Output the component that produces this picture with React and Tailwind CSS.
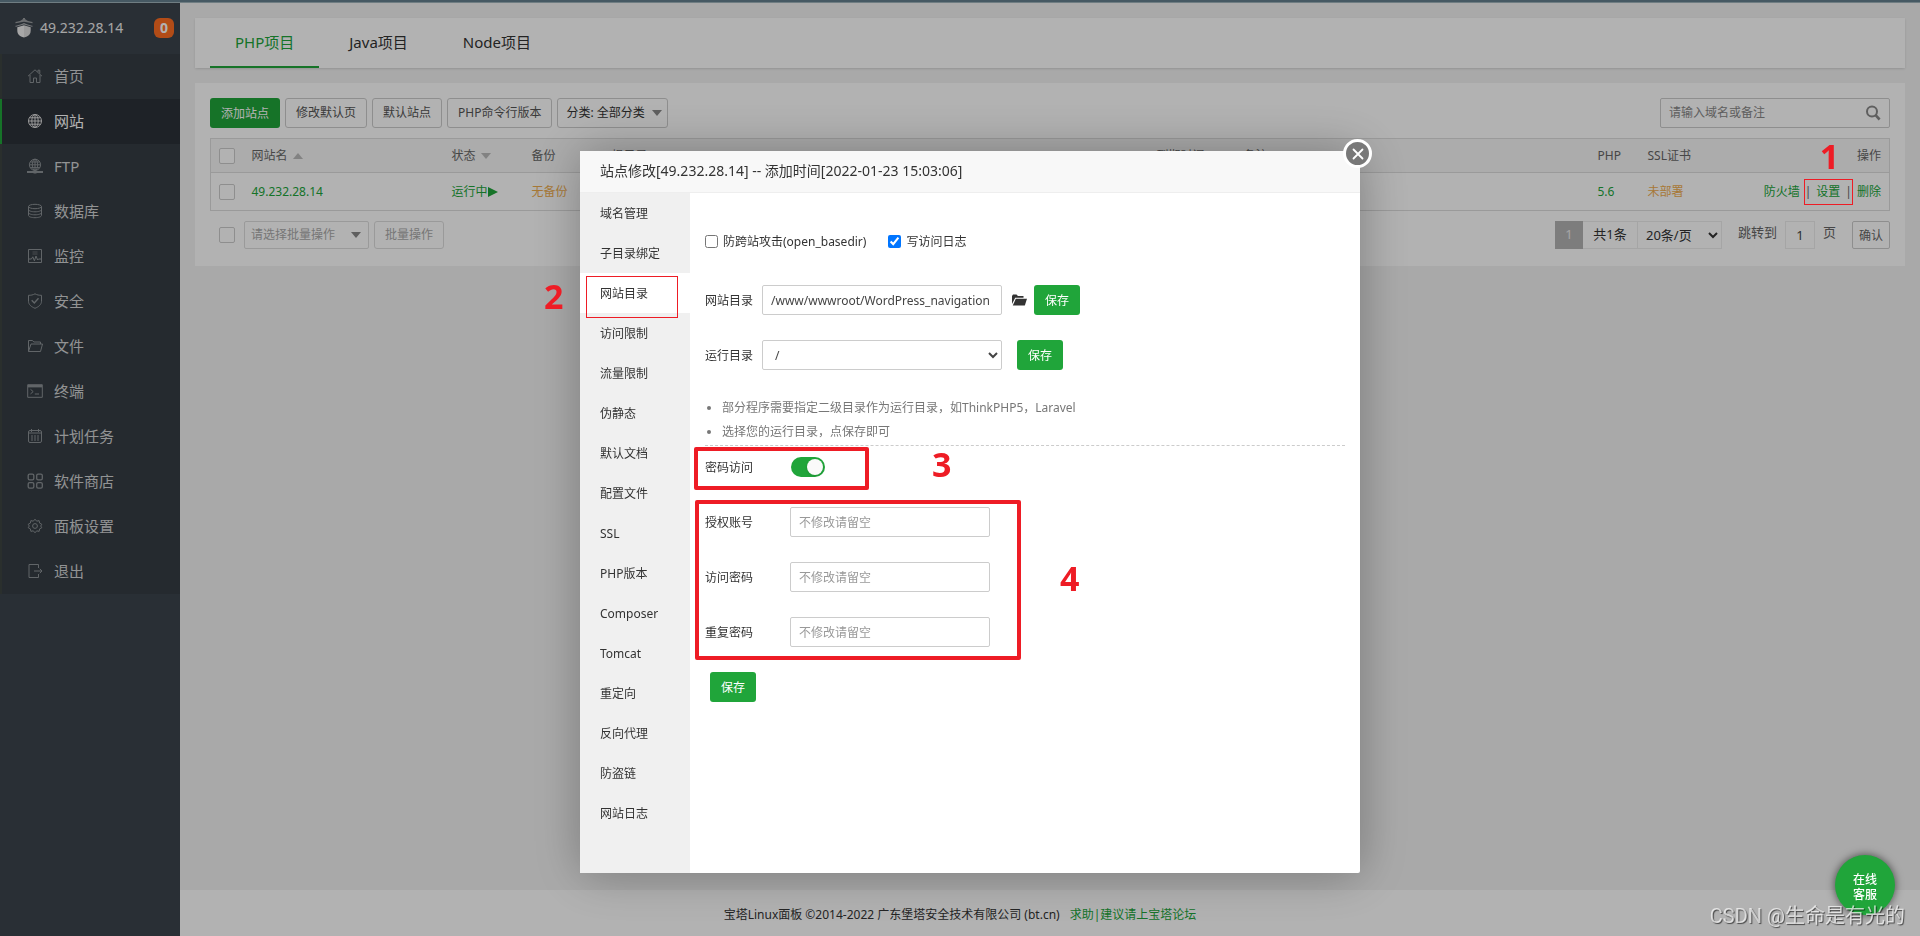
import { useState } from "react";
import { clsx } from "clsx";

const FONT = "font-['Noto_Sans','Noto_Sans_CJK_SC',sans-serif]";

const MENU = [
  { key: "home", label: "首页" },
  { key: "site", label: "网站" },
  { key: "ftp", label: "FTP" },
  { key: "database", label: "数据库" },
  { key: "control", label: "监控" },
  { key: "firewall", label: "安全" },
  { key: "files", label: "文件" },
  { key: "terminal", label: "终端" },
  { key: "crontab", label: "计划任务" },
  { key: "soft", label: "软件商店" },
  { key: "config", label: "面板设置" },
  { key: "logout", label: "退出" },
];

const PROJECT_TABS = ["PHP项目", "Java项目", "Node项目"];

const SITE_TABS = [
  "域名管理",
  "子目录绑定",
  "网站目录",
  "访问限制",
  "流量限制",
  "伪静态",
  "默认文档",
  "配置文件",
  "SSL",
  "PHP版本",
  "Composer",
  "Tomcat",
  "重定向",
  "反向代理",
  "防盗链",
  "网站日志",
];

const AUTH_FIELDS = [
  { id: "auth-user", label: "授权账号", type: "text" },
  { id: "auth-pass", label: "访问密码", type: "password" },
  { id: "auth-repeat", label: "重复密码", type: "password" },
];

const ICONS = {
  home: (
    <>
      <path d="M1 8.2 8 1.8l7 6.4" />
      <path d="M3 7v7.5h3.5V10h3v4.5H13V7" />
      <path d="M11 4V2.2h1.8v3.4" />
    </>
  ),
  site: (
    <>
      <circle cx="8" cy="8" r="6.5" />
      <ellipse cx="8" cy="8" rx="3.2" ry="6.5" />
      <path d="M8 1.5v13M1.5 8h13M2.5 4.8h11M2.5 11.2h11" />
    </>
  ),
  ftp: (
    <>
      <circle cx="8" cy="6.8" r="5.6" />
      <ellipse cx="8" cy="6.8" rx="2.7" ry="5.6" />
      <path d="M8 1.2v11.2M2.4 6.8h11.2M3.3 4h9.4M3.3 9.6h9.4" />
      <path d="M0 14h16" strokeWidth="2" />
      <path d="M6.5 14h3" strokeWidth="3" />
    </>
  ),
  database: (
    <>
      <ellipse cx="8" cy="3.5" rx="6.5" ry="2.2" />
      <path d="M1.5 3.5v9c0 1.2 2.9 2.2 6.5 2.2s6.5-1 6.5-2.2v-9" />
      <path d="M1.5 6.6c0 1.2 2.9 2.2 6.5 2.2s6.5-1 6.5-2.2M1.5 9.6c0 1.2 2.9 2.2 6.5 2.2s6.5-1 6.5-2.2" />
    </>
  ),
  control: (
    <>
      <path d="M1.5 1.5h13v13h-13z" />
      <path d="M5.5 4h5M5.5 6h5" opacity="0.6" />
      <path d="M2 11h2.4l1.4-2.2 1.6 4 1.6-4.8 1.6 4 .9-1H14" />
    </>
  ),
  firewall: (
    <>
      <path d="M8 .8c2 1.2 4 1.5 6.5 1.5v6c0 3.2-2.8 5.5-6.5 7-3.7-1.5-6.5-3.8-6.5-7v-6C4 2.3 6 2 8 .8z" />
      <path d="m4.7 7.3 2.6 2.6 4.2-4.6" strokeWidth="1.4" />
    </>
  ),
  files: (
    <>
      <path d="M1.5 13.5v-11h4l1.3 1.5h6.7v2" />
      <path d="M1.5 13.5 4 6h11.5l-2 7.5z" />
    </>
  ),
  terminal: (
    <>
      <path d="M.7 1.7h14.6v12.6H.7z" />
      <path d="M1 3.2h14" strokeWidth="2.4" />
      <path d="m3.5 6.3 2.7 2.3-2.7 2.3M7.8 11h4.2" />
    </>
  ),
  crontab: (
    <>
      <rect x="1.5" y="2.5" width="13" height="12" rx="1.5" />
      <path d="M4.5 1v3M11.5 1v3M1.5 5h13" />
      <path d="M4 8h2M7 8h2M10 8h2M4 10h2M7 10h2M10 10h2M4 12h2M7 12h2M10 12h2" />
    </>
  ),
  soft: (
    <g strokeWidth="1.3">
      <rect x="1.2" y="1.2" width="5.6" height="5.6" rx="1.4" />
      <rect x="9.7" y="1.2" width="5.6" height="5.6" rx="1.4" />
      <rect x="1.2" y="9.6" width="5.6" height="5.6" rx="1.4" />
      <rect x="9.7" y="9.6" width="5.6" height="5.6" rx="1.4" />
    </g>
  ),
  config: (
    <>
      <path d="M8 1.2 9.7 3.200l2.400-.6.5 2.500 2.200 1.200L13.700 8l1.100 1.700-2.200 1.200-.5 2.500-2.400-.6L8 14.800l-1.700-2-2.400.6-.5-2.500-2.200-1.200L2.300 8 1.200 6.300l2.200-1.200.5-2.500 2.400.6z" strokeLinejoin="round" />
      <circle cx="8" cy="8" r="2.400" />
    </>
  ),
  logout: (
    <>
      <path d="M11.5 5V1.5H2v13h9.5V11" />
      <path d="M7 8h8M12.8 5.8 15 8l-2.2 2.2" />
    </>
  ),
};

const plainButton =
  "h-[30px] rounded-[3px] border border-[#ccc] bg-white px-2.5 text-xs text-[#555]";
const greenButton = "h-[30px] rounded-[3px] bg-[#20a53a] px-[11px] pt-0.5 text-xs text-white";
const fieldClasses =
  "h-[30px] rounded-[2px] border border-[#ccc] bg-white px-2 text-xs text-[#444] outline-none placeholder:text-[#999]";
const boxClasses = "block size-4 appearance-none rounded-[2px] border border-[#ccc] bg-white";

function Triangle({ className, up }) {
  return (
    <svg viewBox="0 0 10 6" className={clsx("h-1.5 w-2.5 fill-current", className)} aria-hidden="true">
      <path d={up ? "M5 0l5 6H0z" : "M0 0h10L5 6z"} />
    </svg>
  );
}

function TowerLogo() {
  return (
    <svg viewBox="0 0 18 20" className="h-5 w-[18px]" aria-hidden="true">
      <path d="M.5 4C4 3.500 6.500 2.500 8 1V0h2v1c1.500 1.500 4 2.500 7.500 3v1.300L9 3.800.5 5.300z" fill="#9a9da0" />
      <path d="M0 8c4-.8 7-1.900 9-3 2 1.100 5 2.200 9 3l-1 .8L9 6.600 1 8.800z" fill="#aaadb0" />
      <path d="M2.300 9.300 9 7.200V19.500c-4.500-1-6.700-3.500-6.700-7z" fill="#f0f0f0" />
      <path d="M15.700 9.300 9 7.200V19.500c4.500-1 6.700-3.500 6.700-7z" fill="#dcdcdc" />
    </svg>
  );
}

function Sidebar() {
  return (
    <aside className="flex w-[180px] shrink-0 flex-col bg-[#3c444d]">
      <div className="flex h-[51px] items-center pr-1.5 pb-0.5 pl-[15px]">
        <TowerLogo />
        <span className="ml-[7px] flex-1 text-sm text-[#eee]">49.232.28.14</span>
        <span className="flex size-5 items-center justify-center rounded-md bg-[#ff6d22] text-sm font-bold text-white">
          0
        </span>
      </div>
      <nav className="bg-[#353d44]">
        {MENU.map(({ key, label }) => (
          <a
            key={key}
            href={`#${key}`}
            className={clsx(
              "flex h-[45px] items-center gap-[11px] border-l-2 pb-px pl-[25px] text-[15px]",
              key === "site"
                ? "border-[#20a53a] bg-[#2c3138] text-white"
                : "border-[#3d4441] text-[#d2d3d4]"
            )}
          >
            <svg
              viewBox="0 0 16 16"
              fill="none"
              stroke="currentColor"
              className={clsx("size-4", key === "site" ? "text-[#ddd]" : "text-[#8c9195]")}
              aria-hidden="true"
            >
              {ICONS[key]}
            </svg>
            {label}
          </a>
        ))}
      </nav>
    </aside>
  );
}

function SiteTable() {
  return (
    <table className="mt-2.5 w-full table-fixed border-collapse border border-[#ddd] text-left text-xs text-[#666]">
      <colgroup>
        <col className="w-[33px]" />
        <col className="w-[200px]" />
        <col className="w-20" />
        <col className="w-20" />
        <col />
        <col className="w-[87px]" />
        <col className="w-[354px]" />
        <col className="w-[50px]" />
        <col className="w-[90px]" />
        <col className="w-[160px]" />
      </colgroup>
      <thead className="bg-[#f6f6f6]">
        <tr className="h-[34px] border-b border-[#ddd] *:px-2 *:font-normal">
          <th>
            <input type="checkbox" aria-label="全选" className={boxClasses} />
          </th>
          <th>
            <span className="flex items-center gap-[5px]">
              网站名
              <Triangle up className="text-[#bbb]" />
            </span>
          </th>
          <th>
            <span className="flex items-center gap-[5px]">
              状态
              <Triangle className="text-[#bbb]" />
            </span>
          </th>
          <th>备份</th>
          <th>根目录</th>
          <th>到期时间</th>
          <th>备注</th>
          <th>PHP</th>
          <th>SSL证书</th>
          <th className="text-right">操作</th>
        </tr>
      </thead>
      <tbody>
        <tr className="h-[38px] *:px-2">
          <td>
            <input type="checkbox" aria-label="49.232.28.14" className={boxClasses} />
          </td>
          <td>
            <a href="#site" className="text-[#20a53a]">49.232.28.14</a>
          </td>
          <td>
            <a href="#stop" className="flex items-center text-[#20a53a]">
              运行中
              <svg viewBox="0 0 10 10" className="size-2.5 fill-current" aria-hidden="true">
                <path d="M0 0l10 5-10 5z" />
              </svg>
            </a>
          </td>
          <td>
            <a href="#backup" className="text-[#f0ad4e]">无备份</a>
          </td>
          <td />
          <td />
          <td />
          <td>
            <a href="#php" className="text-[#20a53a]">5.6</a>
          </td>
          <td>
            <a href="#ssl" className="text-[#f0ad4e]">未部署</a>
          </td>
          <td>
            <div className="flex justify-end text-[#20a53a]">
              <a href="#waf">防火墙</a>
              <span className="relative flex">
                <span className="px-[5px] text-[#666]">|</span>
                <a href="#edit">设置</a>
                <span className="px-[5px] text-[#666]">|</span>
                {/* step 1, kept above the dimmed page */}
                <span className="absolute inset-x-1 -inset-y-[5px] z-30 border border-[#ee1c25]" />
                <span className="absolute -top-12 left-5 z-30 text-[34px] leading-10 font-bold text-[#ee1c25]">
                  1
                </span>
              </span>
              <a href="#delete">删除</a>
            </div>
          </td>
        </tr>
      </tbody>
    </table>
  );
}

function SiteList() {
  return (
    <section className="mt-[15px] bg-white px-[15px] pt-[15px] pb-[17px]">
      <div className="flex gap-[5px]">
        <button type="button" className={greenButton}>添加站点</button>
        <button type="button" className={plainButton}>修改默认页</button>
        <button type="button" className={plainButton}>默认站点</button>
        <button type="button" className={plainButton}>PHP命令行版本</button>
        <div className="relative">
          <select
            aria-label="分类"
            className="h-[30px] w-[111px] appearance-none rounded-[3px] border border-[#ccc] bg-white pl-2 text-xs text-[#333]"
          >
            <option>分类: 全部分类</option>
          </select>
          <Triangle className="absolute top-3 right-1.5 text-[#888]" />
        </div>
        <div className="ml-auto flex h-[30px] w-[230px] items-center rounded-[2px] border border-[#ccc] bg-white px-2">
          <input
            type="text"
            aria-label="搜索"
            placeholder="请输入域名或备注"
            className="min-w-0 flex-1 text-xs outline-none placeholder:text-[#888]"
          />
          <button type="button" aria-label="搜索站点">
            <svg viewBox="0 0 16 16" fill="none" stroke="#888" strokeWidth="2" className="size-4">
              <circle cx="7" cy="6.5" r="5" />
              <path d="m10.6 10.2 4 4.3" strokeWidth="2.6" />
            </svg>
          </button>
        </div>
      </div>

      <SiteTable />

      <div className="mt-2.5 flex items-center text-xs">
        <input type="checkbox" aria-label="选择全部站点" className={clsx(boxClasses, "ml-[9px]")} />
        <div className="relative ml-[9px]">
          <select
            aria-label="批量操作类型"
            className="h-7 w-[125px] appearance-none rounded-[2px] border border-[#ddd] bg-white pl-1.5 text-[#aaa]"
          >
            <option>请选择批量操作</option>
          </select>
          <Triangle className="absolute top-[11px] right-2 text-[#888]" />
        </div>
        <button type="button" className="ml-[5px] h-7 rounded-[3px] border border-[#ddd] px-2.5 text-[#aaa]">
          批量操作
        </button>

        <div className="ml-auto flex items-center text-[13px] text-[#333]">
          <span className="flex h-7 w-7 items-center justify-center bg-[#b4b4b4] text-[#eee]">1</span>
          <span className="flex h-7 w-[54px] items-center justify-center border-y border-[#ececec]">共1条</span>
          <select aria-label="每页条数" className="h-7 w-[85px] border border-[#ececec] bg-white pl-1">
            <option>20条/页</option>
          </select>
          <label htmlFor="page" className="mr-2 mb-1 ml-4 text-[#666]">跳转到</label>
          <input
            id="page"
            type="text"
            defaultValue="1"
            className="h-7 w-[30px] border border-[#ececec] text-center text-[#444] outline-none"
          />
          <span className="mb-1 ml-2 text-[#666]">页</span>
          <button type="button" className="ml-4 h-7 w-[38px] rounded-[2px] border border-[#ccc] pt-0.5 text-xs text-[#666]">
            确认
          </button>
        </div>
      </div>
    </section>
  );
}

function SiteDialog() {
  const [tab, setTab] = useState("网站目录");
  const [locked, setLocked] = useState(true);

  return (
    <div
      role="dialog"
      aria-labelledby="dialog-title"
      className="relative flex h-[722px] w-[780px] flex-col rounded-[2px] bg-white text-xs text-[#333] shadow-[1px_1px_50px_rgba(0,0,0,0.3)]"
    >
      <h2 id="dialog-title" className="h-[42px] border-b border-[#eee] bg-[#f8f8f8] px-5 text-sm leading-10 text-[#333]">
        站点修改[49.232.28.14] -- 添加时间[2022-01-23 15:03:06]
      </h2>
      <button
        type="button"
        aria-label="关闭"
        className="absolute -top-3 -right-3 flex size-[29px] items-center justify-center rounded-full border-[3px] border-white bg-[#787878]"
      >
        <svg viewBox="0 0 12 12" stroke="#fff" strokeWidth="1.8" strokeLinecap="round" className="size-3">
          <path d="m1.5 1.5 9 9M10.5 1.5l-9 9" />
        </svg>
      </button>

      <div className="flex min-h-0 flex-1">
        <nav className="flex w-[110px] shrink-0 flex-col bg-[#f0f0f0]">
          {SITE_TABS.map((name) => (
            <button
              key={name}
              type="button"
              onClick={() => setTab(name)}
              className={clsx("h-10 pt-0.5 pl-5 text-left", tab === name && "bg-white")}
            >
              {name}
            </button>
          ))}
        </nav>

        <div className="flex-1 px-[15px] pt-10">
          <div className="flex h-4 items-center">
            <input id="basedir" type="checkbox" className="size-[13px]" />
            <label htmlFor="basedir" className="ml-[5px] pt-0.5">防跨站攻击(open_basedir)</label>
            <input id="log" type="checkbox" defaultChecked className="ml-[22px] size-[13px]" />
            <label htmlFor="log" className="ml-[5px] pt-0.5">写访问日志</label>
          </div>

          <div className="mt-9 flex items-center">
            <label htmlFor="path" className="w-[57px] pt-0.5">网站目录</label>
            <input
              id="path"
              type="text"
              defaultValue="/www/wwwroot/WordPress_navigation"
              className={clsx(fieldClasses, "w-60")}
            />
            <button type="button" aria-label="选择目录" className="mr-[7px] ml-2.5">
              <svg viewBox="0 0 15 12" className="h-3 w-[15px] fill-[#333]">
                <path d="M0 10V2l1-1.5h3.5L6 2h5.5v1.8H3.2z" />
                <path d="M3.8 4.8H15l-2.2 6.7H.8z" />
              </svg>
            </button>
            <button type="button" className={greenButton}>保存</button>
          </div>

          <div className="mt-[25px] flex items-center">
            <label htmlFor="run-path" className="w-[57px] pt-0.5">运行目录</label>
            <select id="run-path" className={clsx(fieldClasses, "w-60")}>
              <option>/</option>
            </select>
            <button type="button" className={clsx(greenButton, "ml-[15px]")}>保存</button>
          </div>

          <ul className="mt-[26px] list-disc border-b border-dashed border-[#ccc] pb-px pl-[17px] leading-6 text-[#777]">
            <li>部分程序需要指定二级目录作为运行目录，如ThinkPHP5，Laravel</li>
            <li>选择您的运行目录，点保存即可</li>
          </ul>

          <div className="mt-[11px] flex h-5 items-center">
            <label htmlFor="lock" className="w-[86px] pt-0.5">密码访问</label>
            <input
              id="lock"
              type="checkbox"
              role="switch"
              checked={locked}
              onChange={(e) => setLocked(e.target.checked)}
              className="relative h-5 w-[34px] appearance-none rounded-full bg-[#ccc] before:absolute before:top-0.5 before:left-0.5 before:size-4 before:rounded-full before:bg-[#fafafa] before:shadow checked:bg-[#20a53a] checked:before:left-4"
            />
          </div>

          <div className="mt-[30px] flex flex-col gap-[25px]">
            {AUTH_FIELDS.map(({ id, label, type }) => (
              <div key={id} className="flex items-center">
                <label htmlFor={id} className="w-[85px] pt-0.5">{label}</label>
                <input id={id} type={type} placeholder="不修改请留空" className={clsx(fieldClasses, "w-[200px]")} />
              </div>
            ))}
          </div>

          <button type="button" className={clsx(greenButton, "mt-[25px] ml-[5px]")}>保存</button>
        </div>
      </div>

      {/* numbered steps drawn over the dialog */}
      <div className="pointer-events-none text-[34px] leading-10 font-bold text-[#ee1c25]">
        <span className="absolute top-[125px] left-1.5 h-[42px] w-[92px] border border-current" />
        <span className="absolute top-[125px] -left-9">2</span>
        <span className="absolute top-[296px] left-[114px] h-[43px] w-[175px] rounded-[2px] border-4 border-current" />
        <span className="absolute top-[293px] left-[352px]">3</span>
        <span className="absolute top-[349px] left-[115px] h-[160px] w-[326px] rounded-[2px] border-4 border-current" />
        <span className="absolute top-[407px] left-[480px]">4</span>
      </div>
    </div>
  );
}

export default function App() {
  const [project, setProject] = useState("PHP项目");

  return (
    <div className={clsx("relative flex min-h-screen flex-col bg-[#f3f3f3]", FONT)}>
      <div className="h-[3px] border-b border-[#9fb4ba] bg-[#65808e]" />
      <div className="flex flex-1">
        <Sidebar />
        <main className="min-w-0 flex-1 p-[15px]">
          <div className="flex h-[50px] gap-[5px] bg-white px-[15px] shadow-sm">
            {PROJECT_TABS.map((name) => (
              <button
                key={name}
                type="button"
                onClick={() => setProject(name)}
                className={clsx(
                  "border-y-2 border-t-transparent px-[25px] pb-0.5 text-[15px]",
                  project === name
                    ? "border-b-[#20a53a] text-[#20a53a]"
                    : "border-b-transparent text-[#333]"
                )}
              >
                {name}
              </button>
            ))}
          </div>
          <SiteList />
        </main>
      </div>

      <footer className="absolute right-0 bottom-0 left-[180px] flex h-[46px] items-center justify-center gap-2.5 bg-white pt-1 pr-[180px] text-xs text-[#333]">
        <span>宝塔Linux面板 ©2014-2022 广东堡塔安全技术有限公司 (bt.cn)</span>
        <a href="#bbs" className="text-[#20a53a]">求助|建议请上宝塔论坛</a>
      </footer>

      <div className="fixed inset-0 z-10 bg-black/30" />
      <div className="fixed inset-0 z-20 flex items-start justify-center pt-[151px] pl-5">
        <SiteDialog />
      </div>

      <button
        type="button"
        className="fixed right-[25px] bottom-[21px] z-30 size-[60px] rounded-full bg-[#20a53a] pt-1 text-xs leading-[15px] font-medium text-white shadow-[0_0_8px_rgba(0,0,0,0.6)]"
      >
        在线
        <br />
        客服
      </button>
      <span className="fixed right-[15px] bottom-1.5 z-40 font-['Roboto','Noto_Sans_CJK_SC',sans-serif] text-xl leading-7 text-white/70 [text-shadow:1px_1px_1px_rgba(0,0,0,0.6)]">
        CSDN @生命是有光的
      </span>
    </div>
  );
}
